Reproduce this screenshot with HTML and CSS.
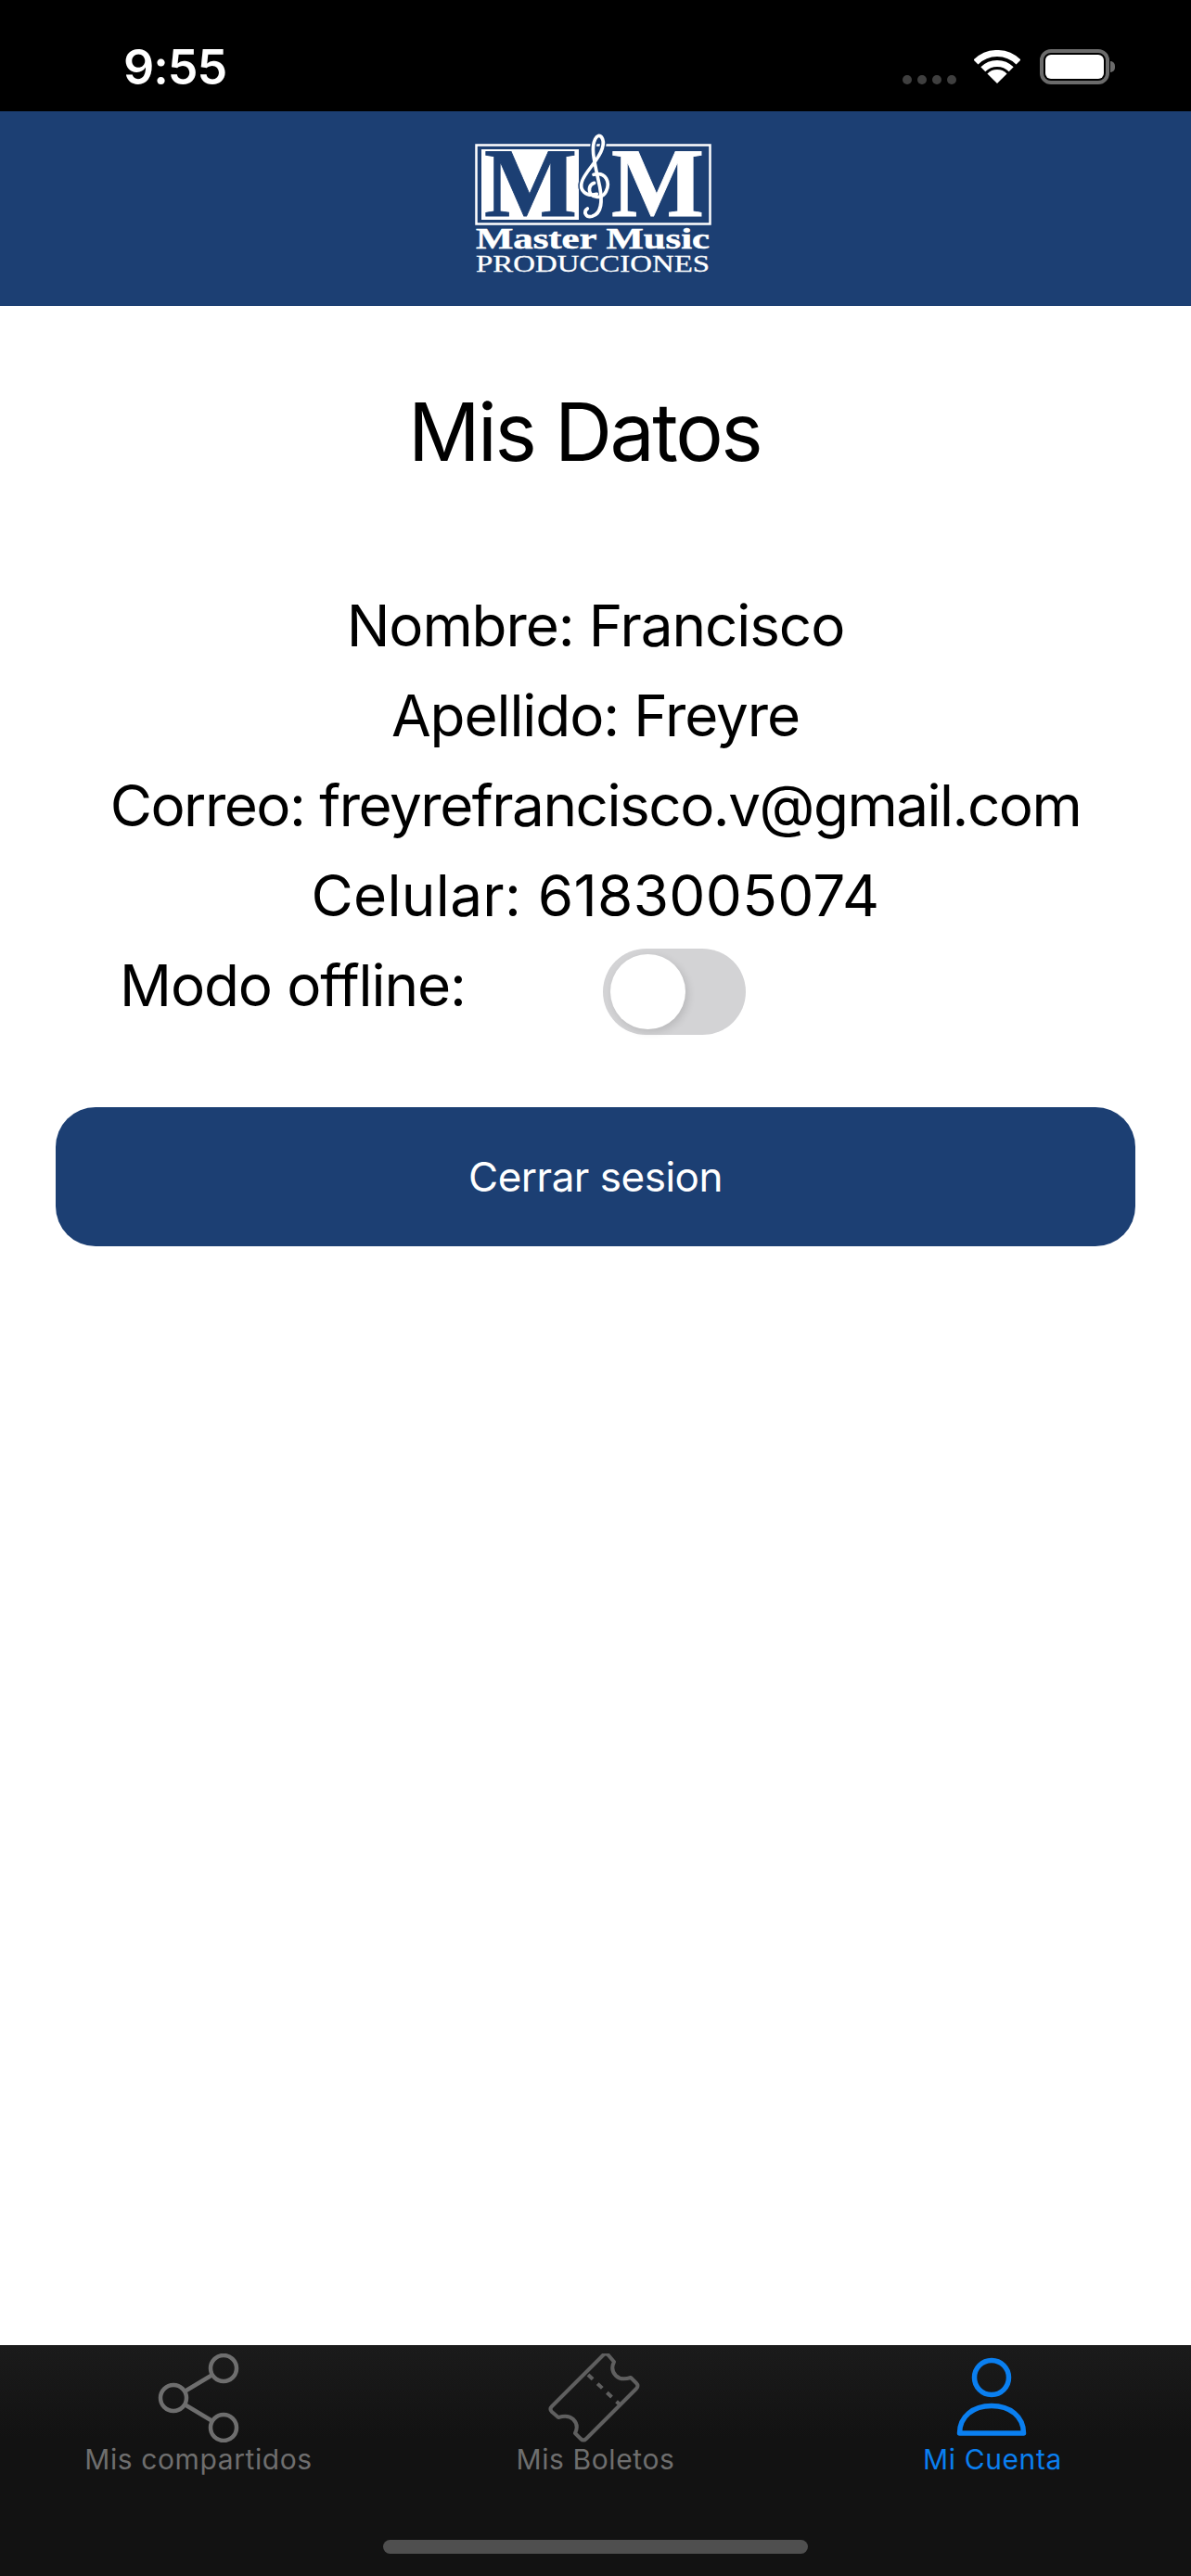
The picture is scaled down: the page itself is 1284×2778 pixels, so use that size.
FILE: index.html
```html
<!DOCTYPE html>
<html lang="es">
<head>
<meta charset="utf-8">
<title>Mis Datos</title>
<link rel="stylesheet" href="styles.css">
</head>
<body>
<div class="app">
  <div class="status">
    <span class="time">9:55</span>
    <div class="status-icons">
      <div class="signal"><i></i><i></i><i></i><i></i></div>
      <svg class="wifi" viewBox="0 0 50 37" width="50" height="37">
        <path d="M2 13A32.5 32.5 0 0 1 48 13" fill="none" stroke="#fff" stroke-width="7"/>
        <path d="M9.8 20.8A21.5 21.5 0 0 1 40.2 20.8" fill="none" stroke="#fff" stroke-width="7"/>
        <path d="M25 36L14.4 25.4A15 15 0 0 1 35.6 25.4Z" fill="#fff"/>
      </svg>
      <div class="battery"><div class="battery-body"><div class="battery-fill"></div></div><div class="battery-cap"></div></div>
    </div>
  </div>
  <header class="header">
    <svg class="logo" viewBox="0 0 255 155" width="255" height="155">
      <rect class="logo-line" x="1.5" y="14.5" width="252" height="85"/>
      <rect class="logo-fill" x="7" y="19" width="105" height="76"/>
      <text class="logo-m logo-m-dark" x="10" y="91">M</text>
      <text class="logo-m" x="147" y="91">M</text>
      <g class="logo-clef" transform="translate(-22,-12) scale(.3333)">
        <path class="clef-halo" d="M460 238C425 248 403 225 412 198C422 165 466 130 478 90C488 58 468 34 455 60C440 90 452 130 470 215C478 260 478 300 445 310C425 315 415 295 430 285"/>
        <path d="M460 238C425 248 403 225 412 198C422 165 466 130 478 90C488 58 468 34 455 60C440 90 452 130 470 215C478 260 478 300 445 310C425 315 415 295 430 285"/>
        <path d="M450 175C490 165 505 200 490 230C480 250 455 252 442 240C432 225 435 208 452 202"/>
      </g>
      <text class="logo-title" x="1" y="126" textLength="252" lengthAdjust="spacingAndGlyphs">Master Music</text>
      <text class="logo-sub" x="1" y="151" textLength="252" lengthAdjust="spacingAndGlyphs">PRODUCCIONES</text>
    </svg>
  </header>
  <main class="content">
    <h1 class="title">Mis Datos</h1>
    <div class="info">
      <p class="info-line">Nombre: Francisco</p>
      <p class="info-line">Apellido: Freyre</p>
      <p class="info-line line-mail">Correo: freyrefrancisco.v@gmail.com</p>
      <p class="info-line line-phone">Celular: 6183005074</p>
    </div>
    <div class="offline">
      <span class="offline-label">Modo offline:</span>
      <div class="toggle"><div class="knob"></div></div>
    </div>
    <button class="logout">Cerrar sesion</button>
  </main>
  <nav class="tabs">
    <div class="tab-row">
      <div class="tab">
        <svg class="tab-icon" viewBox="0 0 128 96" width="128" height="96">
          <g fill="none" stroke="currentColor" stroke-width="4.5">
            <circle cx="91" cy="16" r="14"/>
            <circle cx="37" cy="48" r="14"/>
            <circle cx="91" cy="80" r="14"/>
            <path d="M49 41L79 23M49 55L79 73"/>
          </g>
        </svg>
        <span class="tab-label">Mis compartidos</span>
      </div>
      <div class="tab">
        <svg class="tab-icon icon-ticket" viewBox="0 0 128 96" width="128" height="96">
          <g fill="none" stroke="currentColor" stroke-width="4" stroke-linejoin="round">
            <path d="M72 2Q75 -1 78 2L84 9C81 15 82 20 86 24C90 28 96 28 102 26L108 32Q111 35 108 38L54 92Q51 95 48 92L42 86C45 80 44 75 40 71C36 67 30 67 24 69L17 63Q14 60 17 57Z"/>
            <path d="M56 23L90 55" stroke-dasharray="7 7"/>
          </g>
        </svg>
        <span class="tab-label">Mis Boletos</span>
      </div>
      <div class="tab tab-active">
        <svg class="tab-icon" viewBox="0 0 128 96" width="128" height="96">
          <g fill="none" stroke="currentColor" stroke-width="5.5" stroke-linejoin="round">
            <circle cx="63" cy="26" r="18.5"/>
            <path d="M28.500 86C28.500 68 43 56.500 63 56.500C83 56.500 97.500 68 97.500 86Z"/>
          </g>
        </svg>
        <span class="tab-label">Mi Cuenta</span>
      </div>
    </div>
    <div class="home-bar"></div>
  </nav>
</div>
</body>
</html>
```
FILE: styles.css
```css
* { box-sizing: border-box; }
html, body { margin: 0; padding: 0; background: #fff; }
body { font-family: Inter, "Liberation Sans", sans-serif; color: #000; }
.app { width: 1284px; height: 2778px; display: flex; flex-direction: column; overflow: hidden; }

.status { height: 120px; background: #000; display: flex; align-items: flex-start; justify-content: space-between; padding: 53px 82px 0 133px; color: #fff; }
.time { font-size: 52px; line-height: 40px; font-weight: 600; letter-spacing: -1px; }
.status-icons { display: flex; align-items: flex-start; }
.signal { display: flex; gap: 6px; margin-top: 28px; margin-right: 19px; }
.signal i { display: block; width: 10px; height: 10px; border-radius: 50%; background: #3f3f3f; }
.wifi { display: block; margin-top: 1px; margin-right: 21px; }
.battery { display: flex; align-items: center; }
.battery-body { width: 75px; height: 38px; border: 4px solid #6b6b6b; border-radius: 12px; padding: 2px; }
.battery-fill { width: 100%; height: 100%; background: #fff; border-radius: 6px; }
.battery-cap { width: 5px; height: 12px; background: #6b6b6b; border-radius: 0 6px 6px 0; margin-left: 1px; }

.header { height: 210px; background: #1c3f73; display: flex; justify-content: center; padding-top: 22px; padding-right: 5px; }
.logo { display: block; overflow: visible; }
.logo-line { fill: none; stroke: #fff; stroke-width: 2.5; }
.logo-fill { fill: #fff; }
.logo-m { font-family: "Liberation Serif", serif; font-weight: 700; font-size: 106px; fill: #fff; stroke: #fff; stroke-width: .8px; }
.logo-m-dark { fill: #1c3f73; stroke: #1c3f73; }
.logo-clef path { fill: none; stroke: #fff; stroke-width: 11; stroke-linecap: round; }
.logo-clef .clef-halo { stroke: #1c3f73; stroke-width: 20; }
.logo-title { font-family: "Liberation Serif", serif; font-weight: 700; font-size: 32px; fill: #fff; stroke: #fff; stroke-width: .5px; }
.logo-sub { font-family: "Liberation Serif", serif; font-size: 26px; fill: #fff; stroke: #fff; stroke-width: .3px; }

.content { flex: 1; display: flex; flex-direction: column; align-items: stretch; }
.title { margin: 86px 24px 0 0; font-size: 86px; line-height: 100px; font-weight: 400; letter-spacing: -2.5px; text-align: center; }
.info { margin-top: 110px; }
.info-line { margin: 0; font-size: 62px; line-height: 97px; letter-spacing: -1.1px; text-align: center; }
.line-mail { letter-spacing: -1.5px; }
.line-phone { letter-spacing: 0.3px; }
.offline { display: flex; align-items: flex-start; padding-left: 129px; height: 118px; }
.offline-label { width: 521px; font-size: 62px; line-height: 97px; letter-spacing: -1.1px; }
.toggle { width: 154px; height: 93px; margin-top: 9px; border-radius: 47px; background: #d3d3d5; padding: 6px 8px; }
.knob { width: 81px; height: 81px; border-radius: 50%; background: #fff; box-shadow: 3px 3px 8px rgba(0,0,0,.12); }
.logout { margin: 62px 60px 0; height: 150px; border: 0; border-radius: 43px; background: #1c3f73; color: #fff; font-family: Inter, "Liberation Sans", sans-serif; font-size: 44px; letter-spacing: -0.5px; }

.tabs { height: 249px; background: linear-gradient(#1b1b1b, #121212 40%); display: flex; flex-direction: column; align-items: center; }
.tab-row { width: 100%; display: grid; grid-template-columns: repeat(3, 1fr); padding-top: 9px; }
.tab { display: flex; flex-direction: column; align-items: center; color: #6e6e6e; }
.tab-active { color: #0a7ff0; }
.tab-icon { display: block; }
.icon-ticket { color: #5f5f5f; }
.tab-label { font-size: 30px; line-height: 36px; letter-spacing: 0.6px; }
.home-bar { width: 458px; height: 15px; border-radius: 8px; background: #4f4f4f; margin-top: 69px; }
```
